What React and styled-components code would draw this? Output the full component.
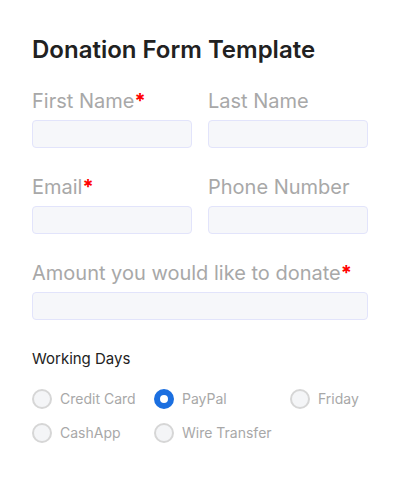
import React from "react";
import styled, { createGlobalStyle } from "styled-components";

const Global = createGlobalStyle`
  html, body { margin: 0; padding: 0; background: #ffffff; }
  body { font-family: Inter, "Noto Sans", sans-serif; -webkit-font-smoothing: antialiased; }
  * { box-sizing: border-box; }
`;

const Form = styled.form`
  width: 400px;
  padding: 34px 32px 24px;
  display: flex;
  flex-direction: column;
`;

const Title = styled.h1`
  margin: 0 0 23px;
  font-size: 24px;
  line-height: 32px;
  font-weight: 600;
  color: #212121;
`;

const Row = styled.div`
  display: grid;
  grid-template-columns: ${(p) => (p.$cols === 1 ? "1fr" : "1fr 1fr")};
  column-gap: 16px;
  margin-bottom: 27px;
`;

const Field = styled.label`
  display: flex;
  flex-direction: column;
  gap: 7px;
`;

const LabelText = styled.span`
  font-size: 20px;
  line-height: 24px;
  color: #a8a8a8;
  font-weight: 400;
`;

const Req = styled.span`
  color: #ff0000;
  font-weight: 700;
`;

const Input = styled.input`
  height: 28px;
  width: 100%;
  border: 1px solid #e2e4fb;
  border-radius: 4px;
  background: #f6f7fa;
  outline: none;
  font: inherit;
`;

const GroupTitle = styled.div`
  font-size: 15px;
  line-height: 20px;
  color: #222222;
  margin: 2px 0 20px;
`;

const RadioGrid = styled.div`
  display: grid;
  grid-template-columns: 122px 136px auto;
  row-gap: 14px;
`;

const RadioItem = styled.label`
  display: flex;
  align-items: center;
  gap: 8px;
  font-size: 14px;
  line-height: 20px;
  color: #a8a8a8;
`;

const Circle = styled.span`
  width: 20px;
  height: 20px;
  border-radius: 50%;
  flex: none;
  background: ${(p) => (p.$checked ? "#ffffff" : "#f4f5f7")};
  border: ${(p) => (p.$checked ? "6px solid #1b6fe0" : "2px solid #d6d6d6")};
`;

const fields = [
  [
    { label: "First Name", req: true },
    { label: "Last Name" },
  ],
  [
    { label: "Email", req: true },
    { label: "Phone Number" },
  ],
  [{ label: "Amount you would like to donate", req: true }],
];

const options = [
  { label: "Credit Card" },
  { label: "PayPal", checked: true },
  { label: "Friday" },
  { label: "CashApp" },
  { label: "Wire Transfer" },
];

export default function App() {
  return (
    <>
      <Global />
      <Form onSubmit={(e) => e.preventDefault()}>
        <Title>Donation Form Template</Title>
        {fields.map((row, i) => (
          <Row key={i} $cols={row.length}>
            {row.map((f) => (
              <Field key={f.label}>
                <LabelText>
                  {f.label}
                  {f.req && <Req>*</Req>}
                </LabelText>
                <Input type="text" />
              </Field>
            ))}
          </Row>
        ))}
        <GroupTitle>Working Days</GroupTitle>
        <RadioGrid>
          {options.map((o) => (
            <RadioItem key={o.label}>
              <Circle $checked={o.checked} />
              {o.label}
            </RadioItem>
          ))}
        </RadioGrid>
      </Form>
    </>
  );
}
